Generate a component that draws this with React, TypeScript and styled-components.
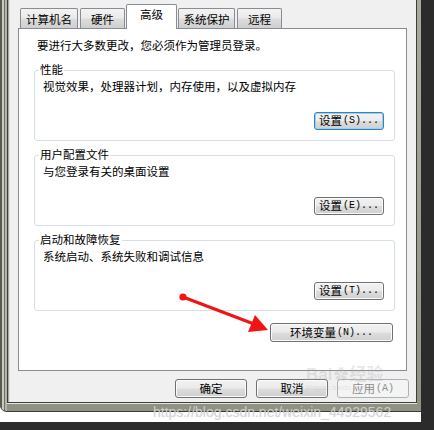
import React from 'react'
import styled, { createGlobalStyle } from 'styled-components'

const GlobalStyle = createGlobalStyle`
  html, body {
    margin: 0;
    padding: 0;
    background: #2b2b2b;
  }
  body {
    font-family: "Liberation Sans", "Noto Sans CJK SC", sans-serif;
  }
`

interface TabInfo {
  label: string
  width: number
  gap: number
  active?: boolean
}

const tabs: TabInfo[] = [
  { label: '计算机名', width: 58, gap: 0 },
  { label: '硬件', width: 45, gap: 2 },
  { label: '高级', width: 51, gap: 1, active: true },
  { label: '系统保护', width: 57, gap: 1 },
  { label: '远程', width: 45, gap: 2 },
]

interface GroupInfo {
  title: string
  text: string
  button: string
  key: string
  focused?: boolean
}

const groups: GroupInfo[] = [
  { title: '性能', text: '视觉效果，处理器计划，内存使用，以及虚拟内存', button: '设置', key: '(S)...', focused: true },
  { title: '用户配置文件', text: '与您登录有关的桌面设置', button: '设置', key: '(E)...' },
  { title: '启动和故障恢复', text: '系统启动、系统失败和调试信息', button: '设置', key: '(T)...' },
]

export default function App() {
  return (
    <Stage>
      <GlobalStyle />
      <Screen>
        <Window>
          <Body>
            <TabStrip>
              {tabs.map(t => (
                <Tab key={t.label} $width={t.width} $gap={t.gap} $active={!!t.active}>
                  {t.label}
                </Tab>
              ))}
            </TabStrip>

            <Panel>
              <Intro>要进行大多数更改，您必须作为管理员登录。</Intro>

              <Groups>
                {groups.map(g => (
                  <GroupBox key={g.title}>
                    <GroupTitle>{g.title}</GroupTitle>
                    <GroupText>{g.text}</GroupText>
                    <GroupActions>
                      <Button $width={70} $focused={!!g.focused}>
                        {g.button}<Mnemonic>{g.key}</Mnemonic>
                      </Button>
                    </GroupActions>
                  </GroupBox>
                ))}
              </Groups>

              <EnvRow>
                <Button $width={123} $height={19}>
                  环境变量<Mnemonic>(N)...</Mnemonic>
                </Button>
              </EnvRow>
            </Panel>

            <Footer>
              <Button $width={72} $height={19}>确定</Button>
              <Button $width={72} $height={19}>取消</Button>
              <Button $width={72} $height={19} $disabled>
                应用<Mnemonic>(A)</Mnemonic>
              </Button>
            </Footer>
          </Body>
        </Window>
      </Screen>

      <Annotation width="434" height="430" viewBox="0 0 434 430">
        <circle cx="183" cy="297" r="3.6" fill="#f21414" />
        <line x1="183" y1="297" x2="254" y2="324" stroke="#f21414" strokeWidth="3" strokeLinecap="round" />
        <polygon points="268,330 248,332 255,315" fill="#f21414" />
      </Annotation>

      <BaiduMark>
        <span>Bai</span><Paw>✿</Paw><span>经验</span>
        <BaiduSub>jingyan.baidu.com</BaiduSub>
      </BaiduMark>

      <CsdnMark>https://blog.csdn.net/weixin_44929562</CsdnMark>
    </Stage>
  )
}

const Stage = styled.div`
  position: relative;
  width: 434px;
  height: 430px;
  overflow: hidden;
  background: #2b2b2b;
`

const Screen = styled.div`
  width: 421px;
  height: 422px;
  background: #ffffff;
`

const Window = styled.div`
  box-sizing: border-box;
  width: 421px;
  height: 412px;
  display: flex;
  padding: 0 4px 8px 7px;
  border-bottom: 1px solid #3b3c34;
  border-bottom-left-radius: 7px;
  background:
    linear-gradient(90deg, #595b50 0 2px, #c9cac0 2px 4px, #6f7066 4px 5px, #b4b5aa 5px 7px, transparent 7px),
    linear-gradient(180deg, #a9aa9c 0, #8f9182 100%);
`

const Body = styled.div`
  flex: 1;
  display: flex;
  flex-direction: column;
  background: #f0f0f0;
  border: 1px solid #3d3e3a;
  border-top: none;
  box-shadow: inset 1px 0 0 #a8a8a8, inset 2px 0 0 #e2e2e2, 0 1px 0 #e6e6e0;
  font-family: "Liberation Sans", "Noto Sans CJK SC", sans-serif;
  font-size: 11.5px;
  color: #000;
`

const TabStrip = styled.div`
  display: flex;
  align-items: flex-end;
  height: 28px;
  padding-left: 12px;
  position: relative;
  z-index: 1;
`

const Tab = styled.div<{ $width: number, $gap: number, $active: boolean }>`
  box-sizing: border-box;
  width: ${props => props.$width}px;
  height: ${props => props.$active ? 25 : 20}px;
  margin-left: ${props => props.$gap}px;
  margin-bottom: ${props => props.$active ? -1 : 0}px;
  padding-top: ${props => props.$active ? 3 : 4}px;
  border: 1px solid #898c95;
  border-bottom: none;
  border-radius: 2px 2px 0 0;
  background: ${props => props.$active
    ? '#ffffff'
    : 'linear-gradient(180deg, #f3f3f3 0%, #ebebeb 45%, #dcdcdc 55%, #cfcfcf 100%)'};
  line-height: 14px;
  text-align: center;
  white-space: nowrap;
`

const Panel = styled.div`
  box-sizing: border-box;
  height: 343px;
  margin: 0 9px 0 10px;
  padding: 10px 11px 0 15px;
  border: 1px solid #898c95;
  background: #ffffff;
  display: flex;
  flex-direction: column;
`

const Intro = styled.div`
  padding-left: 3px;
  line-height: 14px;
  white-space: nowrap;
`

const Groups = styled.div`
  display: flex;
  flex-direction: column;
  gap: 7px;
  margin-top: 10px;
`

const GroupBox = styled.fieldset`
  margin: 0;
  padding: 0 10px 10px 8px;
  border: 1px solid #d5dfe5;
  border-radius: 3px;
  min-width: 0;
`

const GroupTitle = styled.legend`
  margin-left: -4px;
  padding: 0 1px;
  line-height: 14px;
`

const GroupText = styled.div`
  margin-top: 3px;
  line-height: 14px;
  white-space: nowrap;
`

const GroupActions = styled.div`
  display: flex;
  justify-content: flex-end;
  margin-top: 18px;
`

const Button = styled.div<{ $width: number, $height?: number, $focused?: boolean, $disabled?: boolean }>`
  box-sizing: border-box;
  width: ${props => props.$width}px;
  height: ${props => props.$height || 18}px;
  display: flex;
  align-items: center;
  justify-content: center;
  border: 1px solid ${props => props.$disabled ? '#adb2b5' : props.$focused ? '#3c7fb1' : '#707070'};
  border-radius: 3px;
  box-shadow: ${props => props.$disabled
    ? 'none'
    : props.$focused ? 'inset 0 0 0 1px #8fd3f5' : 'inset 0 0 0 1px #fbfbfb'};
  background: ${props => props.$disabled
    ? '#f4f4f4'
    : 'linear-gradient(180deg, #f2f2f2 0%, #ebebeb 48%, #dddddd 52%, #cfcfcf 100%)'};
  color: ${props => props.$disabled ? '#8d8d8d' : '#000'};
  line-height: 14px;
  white-space: nowrap;
`

const Mnemonic = styled.span`
  font-family: "Liberation Mono", monospace;
  font-size: 10px;
  margin-left: 1px;
`

const EnvRow = styled.div`
  display: flex;
  justify-content: flex-end;
  margin-top: 12px;
  padding-right: 2px;
`

const Footer = styled.div`
  display: flex;
  justify-content: flex-end;
  gap: 9px;
  margin-top: 8px;
  padding-right: 7px;
`

const Annotation = styled.svg`
  position: absolute;
  left: 0;
  top: 0;
  pointer-events: none;
`

const BaiduMark = styled.div`
  position: absolute;
  left: 306px;
  top: 366px;
  font-family: "Liberation Sans", "Noto Sans CJK SC", sans-serif;
  font-size: 17px;
  font-weight: bold;
  line-height: 18px;
  color: rgba(170, 170, 170, 0.28);
  pointer-events: none;
`

const Paw = styled.span`
  font-size: 15px;
  margin: 0 1px;
`

const BaiduSub = styled.div`
  font-size: 7px;
  font-weight: normal;
  line-height: 8px;
  letter-spacing: 0.3px;
`

const CsdnMark = styled.div`
  position: absolute;
  left: 153px;
  top: 404px;
  font-family: "Liberation Sans", sans-serif;
  font-size: 14px;
  line-height: 16px;
  color: rgba(214, 214, 214, 0.85);
  text-shadow: 0 0 1px rgba(160, 160, 160, 0.4);
  white-space: nowrap;
  pointer-events: none;
`
